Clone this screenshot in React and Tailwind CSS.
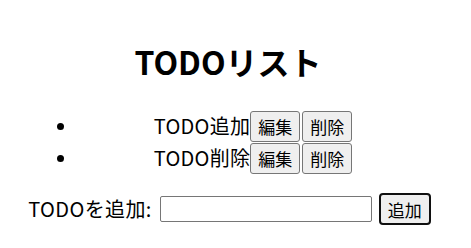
import React, { useState } from 'react';

const font = { fontFamily: '"Noto Sans CJK JP", "Noto Sans", sans-serif' };

const btn =
  'h-[31px] px-[7px] bg-[#efefef] border border-[#767676] rounded-[3px] text-[17px] leading-none text-black';

export default function App() {
  const [todos] = useState(['TODO追加', 'TODO削除']);

  return (
    <div className="w-[471px] bg-white text-black" style={font}>
      <h1 className="pt-[41px] pr-[15px] text-center text-[32px] font-bold leading-[40px]">
        TODOリスト
      </h1>

      <ul className="mt-[29px]">
        {todos.map((todo, i) => (
          <li key={i} className="flex items-center h-[32px] pl-[57px] pr-[29px]">
            <span className="w-[7px] h-[7px] rounded-full bg-black flex-shrink-0" />
            <div className="flex-1 flex items-center justify-center text-[20px]">
              <span className="tracking-[0.3px]">{todo}</span>
              <button className={btn}>編集</button>
              <button className={`${btn} ml-[2px]`}>削除</button>
            </div>
          </li>
        ))}
      </ul>

      <div className="mt-[19px] pr-[12px] flex items-center justify-center text-[20px]">
        <span className="tracking-[0.4px]">TODOを追加:</span>
        <input
          type="text"
          className="ml-[8px] w-[212px] h-[26px] border border-[#767676] rounded-[2px] bg-white"
        />
        <button className="ml-[7px] h-[32px] px-[7px] bg-[#efefef] border-2 border-[#101010] rounded-[4px] text-[17px] leading-none">
          追加
        </button>
      </div>
    </div>
  );
}
